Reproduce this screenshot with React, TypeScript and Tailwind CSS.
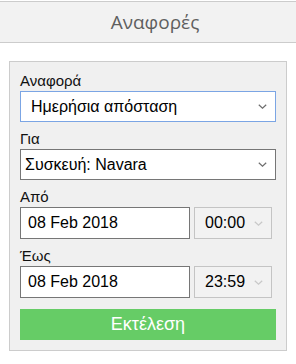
import React from "react";

const Chevron = ({ color = "#6d6d6d" }: { color?: string }) => (
  <svg width="9" height="5" viewBox="0 0 9 5" className="shrink-0">
    <path d="M0.8 0.8 L4.5 4.2 L8.2 0.8" fill="none" stroke={color} strokeWidth="1.2" />
  </svg>
);

const Label = ({ children }: { children: React.ReactNode }) => (
  <div className="h-[27px] pt-[7px] text-[15px] leading-[20px] text-[#111]">{children}</div>
);

export default function App() {
  return (
    <div className="w-[296px] h-[364px] bg-white font-['Liberation_Sans',Arial,sans-serif]">
      <div className="mt-px h-[42px] border-y border-[#cccccc] bg-[#f2f2f2] flex items-center justify-center pl-[14px]">
        <span className="font-['Open_Sans',sans-serif] text-[19px] text-[#5f5f5f]">Αναφορές</span>
      </div>
      <div className="mt-[18px] mx-[9px] border border-[#cccccc] bg-[#f0f0f0] pt-[2px] pb-[10px] px-[10px]">
        <Label>Αναφορά</Label>
        <div className="h-[31px] bg-white border border-[#7ba5e4] flex items-center justify-between pl-[10px] pr-[8px] text-[16px] text-black">
          <span>Ημερήσια απόσταση</span>
          <Chevron />
        </div>
        <Label>Για</Label>
        <div className="h-[31px] bg-white border border-[#767676] flex items-center justify-between pl-[4px] pr-[8px] text-[16px] text-black">
          <span>Συσκευή: Navara</span>
          <Chevron />
        </div>
        <Label>Από</Label>
        <div className="flex gap-[4px] pr-[4px]">
          <div className="w-[170px] h-[32px] bg-white border border-[#767676] flex items-center pl-[7px] text-[16px] text-black">
            08 Feb 2018
          </div>
          <div className="flex-1 h-[32px] bg-[#f2f2f2] border border-[#c4c4c4] flex items-center justify-between pl-[10px] pr-[8px] text-[16px] text-black">
            <span>00:00</span>
            <Chevron color="#c8c8c8" />
          </div>
        </div>
        <Label>Έως</Label>
        <div className="flex gap-[4px] pr-[4px]">
          <div className="w-[170px] h-[32px] bg-white border border-[#767676] flex items-center pl-[7px] text-[16px] text-black">
            08 Feb 2018
          </div>
          <div className="flex-1 h-[32px] bg-[#f2f2f2] border border-[#c4c4c4] flex items-center justify-between pl-[10px] pr-[8px] text-[16px] text-black">
            <span>23:59</span>
            <Chevron color="#c8c8c8" />
          </div>
        </div>
        <div className="mt-[11px] h-[31px] bg-[#66cc66] flex items-center justify-center text-white text-[18px]">
          Εκτέλεση
        </div>
      </div>
    </div>
  );
}
